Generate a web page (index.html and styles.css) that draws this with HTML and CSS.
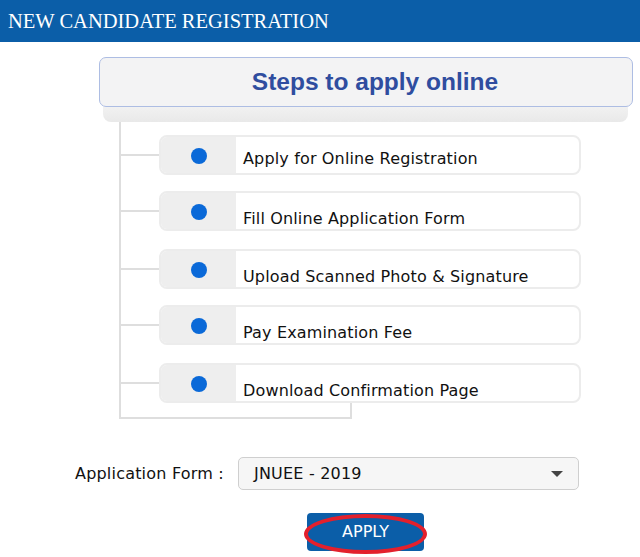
FILE: index.html
```html
<!DOCTYPE html>
<html>
<head>
<meta charset="utf-8">
<link rel="stylesheet" href="styles.css">
</head>
<body>
<div class="topbar">NEW CANDIDATE REGISTRATION</div>
<div class="steps">
  <div class="steps-head">Steps to apply online</div>
  <div class="steps-shadow"></div>
  <div class="tree">
    <div class="item"><div class="item-icon"><span class="dot"></span></div><div class="item-text t1">Apply for Online Registration</div></div>
    <div class="item"><div class="item-icon"><span class="dot"></span></div><div class="item-text">Fill Online Application Form</div></div>
    <div class="item"><div class="item-icon"><span class="dot"></span></div><div class="item-text">Upload Scanned Photo &amp; Signature</div></div>
    <div class="item"><div class="item-icon"><span class="dot"></span></div><div class="item-text">Pay Examination Fee</div></div>
    <div class="item"><div class="item-icon"><span class="dot"></span></div><div class="item-text">Download Confirmation Page</div></div>
  </div>
</div>
<div class="form-row">
  <label class="form-label">Application Form :</label>
  <div class="select"><span>JNUEE - 2019</span><span class="caret"></span></div>
</div>
<div class="btn-row">
  <div class="btn-wrap">
    <div class="btn">APPLY</div>
    <div class="ring"></div>
  </div>
</div>
</body>
</html>
```
FILE: styles.css
```css
html, body { margin: 0; padding: 0; background: #fff; }
body { font-family: "DejaVu Sans", Verdana, sans-serif; color: #111; width: 640px; height: 557px; overflow: hidden; }
.topbar {
  height: 42px; background: #0b5ea8; color: #fff;
  font-family: "Liberation Serif", "Times New Roman", serif; font-size: 20.5px;
  line-height: 42px; padding-left: 8px; box-sizing: border-box;
}
.steps { margin: 15px 0 0 99px; width: 534px; }
.steps-head {
  height: 50px; box-sizing: border-box; border: 1px solid #adbde3; border-radius: 7px;
  background: #f3f3f4; text-align: center; padding-left: 18px;
  font-family: "Liberation Sans", Arial, sans-serif; font-weight: bold; font-size: 24.5px;
  color: #2f4d9f; line-height: 47px;
}
.steps-shadow {
  margin: 0 5px 0 4px; height: 15px; border-radius: 0 0 8px 8px;
  background: linear-gradient(#f1f1f1, #e9e9e9);
}
.tree {
  position: relative;
  margin-left: 20px; width: 233px; box-sizing: border-box;
  border-left: 2px solid #dedede; border-bottom: 2px solid #dedede;
  padding: 13px 0 14px 38px;
}
.tree::after {
  content: ""; position: absolute; right: 0; bottom: 0; width: 2px; height: 15px; background: #dedede;
}
.item {
  position: relative; width: 422px; height: 40px; display: flex;
  border: 2px solid #ececec; border-radius: 8px; box-sizing: border-box;
  background: #fff; margin-bottom: 16px; z-index: 1;
}
.item:nth-child(2), .item:nth-child(4) { margin-bottom: 18px; }
.item:last-child { margin-bottom: 0; }
.item::before {
  content: ""; position: absolute; left: -42px; top: 17px; width: 40px; height: 2px; background: #dedede;
}
.item-icon {
  width: 75px; background: #eeeeee; border-radius: 6px 0 0 6px;
  display: flex; justify-content: center; padding-top: 11px; box-sizing: border-box;
}
.dot { width: 16px; height: 16px; border-radius: 50%; background: #0a69d8; display: block; }
.item-text { padding: 16px 0 0 7px; font-size: 16px; letter-spacing: 0.15px; line-height: 19px; color: #111; }
.item-text.t1 { padding-top: 12px; }
.form-row { display: flex; align-items: center; margin: 38px 0 0 75px; }
.form-label { font-size: 16px; letter-spacing: 0.2px; width: 163px; }
.select {
  width: 341px; height: 33px; box-sizing: border-box; border: 1px solid #cfcfcf; border-radius: 5px;
  background: #f6f6f6; display: flex; align-items: center; justify-content: space-between;
  padding: 0 15px 0 15px; font-size: 16px; letter-spacing: 0.2px;
}
.caret { width: 0; height: 0; border-left: 6px solid transparent; border-right: 6px solid transparent; border-top: 6px solid #444; }
.btn-row { display: flex; justify-content: flex-start; padding-left: 307px; margin-top: 23px; }
.btn-wrap { position: relative; }
.btn {
  width: 117px; height: 38px; background: #0b5ea8; color: #fff; border-radius: 4px;
  font-size: 16px; text-align: center; line-height: 38px;
}
.ring {
  position: absolute; left: -3px; top: 1px; width: 123px; height: 40px; box-sizing: border-box;
  border: 4px solid #e3202c; border-radius: 50%;
}
```
